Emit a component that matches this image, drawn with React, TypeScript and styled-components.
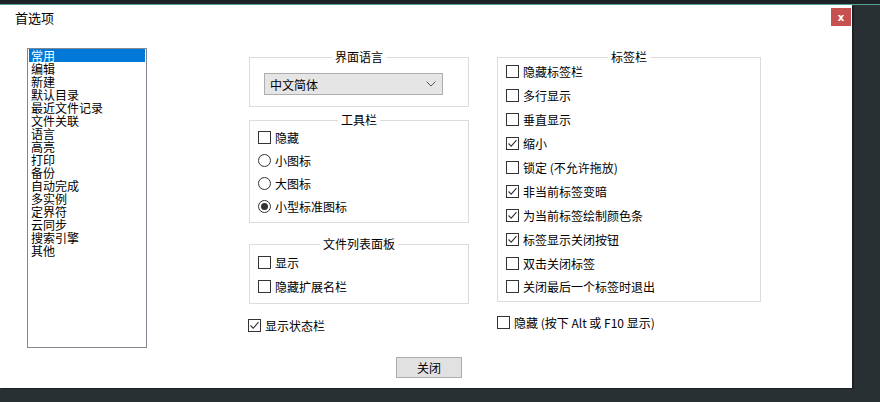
import React from "react";
import styled, { createGlobalStyle } from "styled-components";

const GlobalStyle = createGlobalStyle`
  html, body {
    margin: 0;
    padding: 0;
    background: #272f31;
  }
  body {
    font-family: "Noto Sans CJK SC", "Noto Sans", sans-serif;
    font-size: 12px;
    color: #000;
  }
`;

const Screen = styled.div`
  width: 880px;
  height: 402px;
  background: #283033;
  display: flex;
  flex-direction: column;
  overflow: hidden;
`;

const TopStrip = styled.div`
  height: 4px;
  background: #1d2326;
  border-bottom: 1px solid #55a093;
`;

const Window = styled.div`
  width: 852px;
  height: 383px;
  background: #fff;
  display: flex;
  flex-direction: column;
  box-shadow: 2px 1px 0 #1b2022;
`;

const TitleBar = styled.div`
  height: 26px;
  display: flex;
  align-items: center;
  justify-content: space-between;
  padding: 0 1px 0 15px;
`;

const Title = styled.span`
  font-size: 13px;
  line-height: 16px;
`;

const CloseX = styled.div`
  width: 20px;
  height: 18px;
  margin-top: -2px;
  background: #c75050;
  color: #fff;
  font-family: "DejaVu Sans", sans-serif;
  font-weight: bold;
  font-size: 10px;
  display: flex;
  align-items: center;
  justify-content: center;
`;

const Body = styled.div`
  display: flex;
  flex-direction: column;
  padding-top: 17px;
`;

const TopRow = styled.div`
  display: flex;
  padding-left: 27px;
`;

const ListBox = styled.div`
  width: 120px;
  height: 300px;
  box-sizing: border-box;
  border: 1px solid #828790;
  padding: 0 1px;
`;

const ListItem = styled.div<{ $selected?: boolean }>`
  height: 13px;
  line-height: 13px;
  padding-left: 2px;
  white-space: nowrap;
  background: ${({ $selected }) => ($selected ? "#0078d7" : "transparent")};
  color: ${({ $selected }) => ($selected ? "#fff" : "#000")};
`;

const Column = styled.div<{ $width: number; $ml: number }>`
  width: ${({ $width }) => $width}px;
  margin-left: ${({ $ml }) => $ml}px;
  margin-top: 9px;
  display: flex;
  flex-direction: column;
`;

const GroupBox = styled.div<{ $mt?: number; $pb: number }>`
  border: 1px solid #dcdcdc;
  margin-top: ${({ $mt }) => $mt ?? 0}px;
  margin-left: ${({ $inset }: { $inset?: number }) => $inset ?? 0}px;
  padding: 0 8px ${({ $pb }) => $pb}px 8px;
  display: flex;
  flex-direction: column;
`;

const GroupTitle = styled.div`
  align-self: center;
  margin-top: -8px;
  line-height: 14px;
  padding: 0 3px;
  background: #fff;
`;

const Select = styled.div`
  width: 179px;
  height: 22px;
  box-sizing: border-box;
  margin: 9px 0 0 6px;
  background: #e5e5e5;
  border: 1px solid #adadad;
  display: flex;
  align-items: center;
  justify-content: space-between;
  padding: 0 6px 0 5px;
`;

const Items = styled.div<{ $mt: number }>`
  display: flex;
  flex-direction: column;
  margin-top: ${({ $mt }) => $mt}px;
`;

const Row = styled.div<{ $h: number }>`
  height: ${({ $h }) => $h}px;
  display: flex;
  align-items: center;
  gap: 4px;
  white-space: nowrap;
`;

const Box = styled.span`
  width: 13px;
  height: 13px;
  box-sizing: border-box;
  border: 1px solid #333;
  background: #fff;
  display: flex;
  align-items: center;
  justify-content: center;
  flex-shrink: 0;
`;

const Radio = styled.span<{ $on?: boolean }>`
  width: 13px;
  height: 13px;
  box-sizing: border-box;
  border: 1px solid #333;
  border-radius: 50%;
  background: #fff;
  display: flex;
  align-items: center;
  justify-content: center;
  flex-shrink: 0;

  &::after {
    content: "";
    width: 7px;
    height: 7px;
    border-radius: 50%;
    background: ${({ $on }) => ($on ? "#333" : "transparent")};
  }
`;

const Footer = styled.div`
  display: flex;
  justify-content: center;
  padding-left: 6px;
  margin-top: 9px;
`;

const Button = styled.div`
  width: 66px;
  height: 21px;
  box-sizing: border-box;
  background: #e1e1e1;
  border: 1px solid #adadad;
  display: flex;
  align-items: center;
  justify-content: center;
`;

const Check = () => (
  <svg width="11" height="11" viewBox="0 0 11 11">
    <path d="M1.5 5.5 L4.2 8.2 L9.5 2.2" fill="none" stroke="#333" strokeWidth="1.1" />
  </svg>
);

const CheckRow: React.FC<{ label: string; checked?: boolean; h: number }> = ({ label, checked, h }) => (
  <Row $h={h}>
    <Box>{checked && <Check />}</Box>
    <span>{label}</span>
  </Row>
);

const RadioRow: React.FC<{ label: string; on?: boolean }> = ({ label, on }) => (
  <Row $h={23}>
    <Radio $on={on} />
    <span>{label}</span>
  </Row>
);

const pages = [
  "常用", "编辑", "新建", "默认目录", "最近文件记录", "文件关联", "语言", "高亮",
  "打印", "备份", "自动完成", "多实例", "定界符", "云同步", "搜索引擎", "其他",
];

const tabOptions: [string, boolean][] = [
  ["隐藏标签栏", false],
  ["多行显示", false],
  ["垂直显示", false],
  ["缩小", true],
  ["锁定 (不允许拖放)", false],
  ["非当前标签变暗", true],
  ["为当前标签绘制颜色条", true],
  ["标签显示关闭按钮", true],
  ["双击关闭标签", false],
  ["关闭最后一个标签时退出", false],
];

export default function App() {
  return (
    <Screen>
      <GlobalStyle />
      <TopStrip />
      <Window>
        <TitleBar>
          <Title>首选项</Title>
          <CloseX>x</CloseX>
        </TitleBar>
        <Body>
          <TopRow>
            <ListBox>
              {pages.map((p, i) => (
                <ListItem key={p} $selected={i === 0}>{p}</ListItem>
              ))}
            </ListBox>

            <Column $width={221} $ml={101}>
              <GroupBox $pb={11} $inset={1}>
                <GroupTitle>界面语言</GroupTitle>
                <Select>
                  <span>中文简体</span>
                  <svg width="10" height="6" viewBox="0 0 10 6">
                    <path d="M0.5 0.5 L5 5 L9.5 0.5" fill="none" stroke="#555" strokeWidth="1" />
                  </svg>
                </Select>
              </GroupBox>

              <GroupBox $mt={13} $pb={4} $inset={1}>
                <GroupTitle>工具栏</GroupTitle>
                <Items $mt={-1}>
                  <CheckRow label="隐藏" h={23} />
                  <RadioRow label="小图标" />
                  <RadioRow label="大图标" />
                  <RadioRow label="小型标准图标" on />
                </Items>
              </GroupBox>

              <GroupBox $mt={21} $pb={5} $inset={1}>
                <GroupTitle>文件列表面板</GroupTitle>
                <Items $mt={-1}>
                  <CheckRow label="显示" h={24} />
                  <CheckRow label="隐藏扩展名栏" h={24} />
                </Items>
              </GroupBox>

              <Items $mt={9}>
                <CheckRow label="显示状态栏" checked h={24} />
              </Items>
            </Column>

            <Column $width={264} $ml={28}>
              <GroupBox $pb={2}>
                <GroupTitle>标签栏</GroupTitle>
                <Items $mt={-4}>
                  {tabOptions.map(([label, checked]) => (
                    <CheckRow key={label} label={label} checked={checked} h={23.9} />
                  ))}
                </Items>
              </GroupBox>

              <Items $mt={9}>
                <CheckRow label="隐藏 (按下 Alt 或 F10 显示)" h={24} />
              </Items>
            </Column>
          </TopRow>

          <Footer>
            <Button>关闭</Button>
          </Footer>
        </Body>
      </Window>
    </Screen>
  );
}
